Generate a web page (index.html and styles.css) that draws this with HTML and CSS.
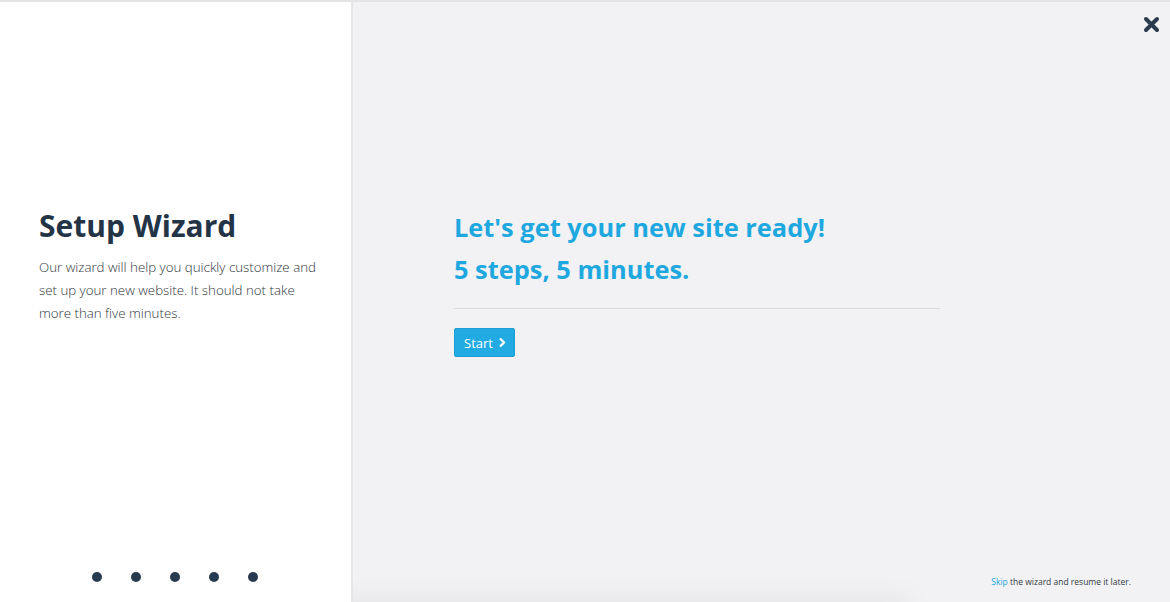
FILE: index.html
```html
<!DOCTYPE html>
<html lang="en">
<head>
    <meta charset="UTF-8">
    <meta name="viewport" content="width=device-width, initial-scale=1.0">
    <title>Setup Wizard</title>
    <link rel="stylesheet" href="styles.css">
</head>
<body>

    <div class="wizard">
        <div class="side">
            <div class="side-text">
                <h1>Setup Wizard</h1>
                <p>Our wizard will help you quickly customize and set up your new website. It should not take more than five minutes.</p>
            </div>
            <div class="dots">
                <span></span><span></span><span></span><span></span><span></span>
            </div>
        </div>

        <div class="main">
            <a class="close" href="#" title="Close">
                <svg width="17" height="17" viewBox="0 0 17 17">
                    <path d="M3 3 L14 14 M14 3 L3 14" stroke="#2b3b4e" stroke-width="4" stroke-linecap="round"/>
                </svg>
            </a>

            <div class="intro">
                <h2>Let's get your new site ready!<br>5 steps, 5 minutes.</h2>
                <hr>
                <button class="start">Start
                    <svg width="8" height="11" viewBox="0 0 8 11">
                        <path d="M2 1.5 L6 5.5 L2 9.5" fill="none" stroke="#fff" stroke-width="2.2"/>
                    </svg>
                </button>
            </div>

            <p class="skip"><a href="#">Skip</a> the wizard and resume it later.</p>
        </div>
    </div>

    <div class="bottom-shade"></div>

</body>
</html>
```

FILE: styles.css
```css
html, body {
    margin: 0;
    height: 100%;
}
body {
    font-family: "Open Sans", Arial, sans-serif;
    background-color: #f2f2f4;
    border-top: 2px solid #e4e4e6;
    box-sizing: border-box;
    overflow: hidden;
}
.wizard {
    display: flex;
    height: 100%;
}
.side {
    width: 351px;
    background: #ffffff;
    border-right: 2px solid #e6e6e8;
    box-sizing: content-box;
    display: flex;
    flex-direction: column;
    justify-content: space-between;
    position: relative;
    z-index: 2;
}
.side-text {
    padding: 205px 30px 0 39px;
}
.side h1 {
    margin: 0;
    font-size: 30px;
    font-weight: 700;
    color: #243447;
    line-height: 38px;
}
.side p {
    margin: 11px 0 0;
    font-size: 13.3px;
    font-weight: 300;
    line-height: 23px;
    color: #30363e;
}
.dots {
    display: flex;
    gap: 29px;
    padding: 0 0 20px 92px;
}
.dots span {
    width: 10px;
    height: 10px;
    border-radius: 50%;
    background: #283a4f;
}
.main {
    flex: 1;
    position: relative;
    display: flex;
    flex-direction: column;
}
.close {
    position: absolute;
    top: 14px;
    right: 10px;
}
.intro {
    padding: 204px 0 0 101px;
    width: 486px;
}
.intro h2 {
    margin: 0;
    font-size: 25.4px;
    font-weight: 700;
    line-height: 42px;
    color: #1fa8e0;
}
.intro hr {
    border: none;
    border-top: 1px solid #dcdcde;
    margin: 18px 0 19px;
}
.start {
    display: flex;
    align-items: center;
    gap: 5px;
    height: 29px;
    padding: 0 8px 0 9px;
    font-family: "Open Sans", Arial, sans-serif;
    font-size: 13px;
    font-weight: 400;
    color: #ffffff;
    background-color: #22aae3;
    border: 1px solid #1b9fd6;
    border-radius: 2px;
    cursor: pointer;
}
.skip {
    margin: auto 39px 15px auto;
    font-size: 8.5px;
    color: #333a42;
}
.skip a {
    color: #22a5dd;
    text-decoration: none;
}
.bottom-shade {
    position: fixed;
    left: 260px;
    right: 260px;
    bottom: -20px;
    height: 20px;
    box-shadow: 0 0 30px rgba(0, 0, 0, 0.08);
}
```
